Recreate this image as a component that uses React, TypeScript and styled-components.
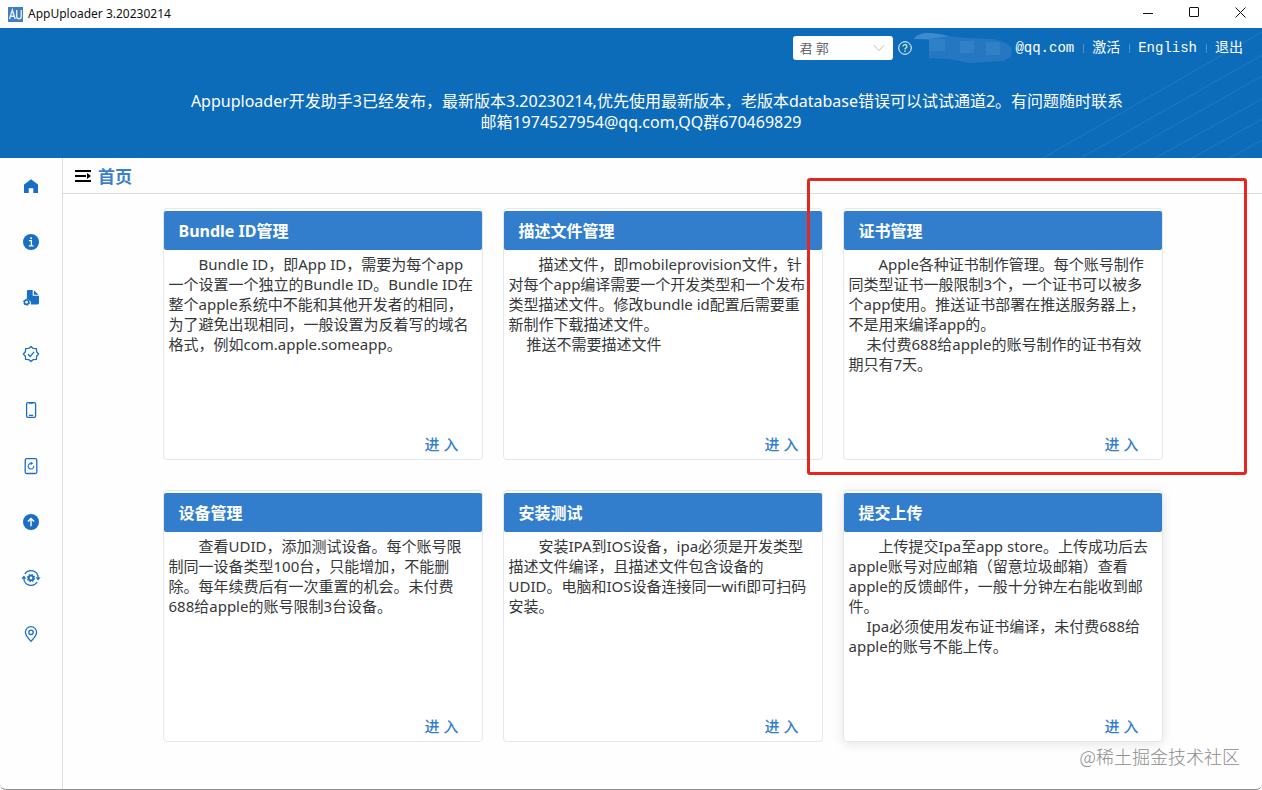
import React from 'react';
import styled, { createGlobalStyle, css } from 'styled-components';

const GlobalStyle = createGlobalStyle`
  *, *::before, *::after { box-sizing: border-box; }
  body {
    margin: 0;
    background: #fefefe;
    color: #36373a;
    font-family: 'Noto Sans', 'Noto Sans CJK SC', sans-serif;
  }
  button, select { font: inherit; }
`;

const blue = '#1a6fc4';

const Window = styled.div`
  position: relative;
  display: flex;
  flex-direction: column;
  min-height: 100vh;
  border-bottom: 1px solid #8f8f8f;
  border-radius: 0 0 6px 6px;
`;

const TitleBar = styled.div`
  display: flex;
  align-items: center;
  height: 28px;
  padding-left: 8px;
  background: #fff;
  color: #111;
`;

const AppLogo = styled.svg`
  width: 15px;
  height: 15px;
  margin-right: 5px;
`;

const AppName = styled.span`
  flex: 1;
  font-size: 12px;
  line-height: 16px;
`;

const WindowButton = styled.button`
  display: flex;
  align-items: center;
  justify-content: center;
  width: 46px;
  height: 28px;
  padding: 0 0 4px 2px;
  border: 0;
  background: transparent;
`;

const Header = styled.header`
  position: relative;
  height: 130px;
  background: #0d6cb9;
  color: #fff;
`;

const HeaderLines = styled.svg`
  position: absolute;
  right: 0;
  bottom: 0;
`;

const AccountBar = styled.div`
  position: relative;
  display: flex;
  align-items: center;
  justify-content: flex-end;
  height: 40px;
  padding-right: 19px;
  font-family: 'Liberation Mono', 'Noto Sans CJK SC', monospace;
  font-size: 14px;
  line-height: 20px;
`;

const TeamPicker = styled.label`
  position: relative;
  display: flex;
  width: 100px;
  margin-right: 5px;
`;

const TeamSelect = styled.select`
  width: 100%;
  height: 24px;
  padding: 0 24px 1px 6px;
  border: 0;
  border-radius: 3px;
  appearance: none;
  background: #fff;
  color: #606266;
  font-family: 'Noto Sans', 'Noto Sans CJK SC', sans-serif;
  font-size: 13px;
`;

const TeamArrow = styled.svg`
  position: absolute;
  top: 8px;
  right: 8px;
  pointer-events: none;
`;

const HelpButton = styled.button`
  display: flex;
  padding: 0;
  border: 0;
  background: transparent;
`;

const MaskedName = styled.svg`
  margin-right: 2px;
`;

const AccountLink = styled.a`
  color: #fff;
  text-decoration: none;
`;

const Divider = styled.span`
  width: 1px;
  height: 9px;
  margin: 0 8px 0 9px;
  background: #4d90cc;
`;

const Notice = styled.p`
  position: relative;
  margin: 23px 0 0;
  padding: 0 0 0 20px;
  font-size: 16px;
  line-height: 21px;
  text-align: center;
  text-indent: 32px;
`;

const Body = styled.div`
  display: flex;
  flex: 1;
`;

const Sidebar = styled.nav`
  flex: none;
  width: 63px;
  border-right: 1px solid #dcdfe6;
`;

const NavLink = styled.a`
  display: flex;
  align-items: center;
  justify-content: center;
  height: 56px;
  color: ${blue};
`;

const Main = styled.main`
  flex: 1;
`;

const Crumb = styled.div`
  display: flex;
  align-items: center;
  gap: 7px;
  height: 36px;
  padding-left: 12px;
  border-bottom: 1px solid #dadada;
`;

const MenuButton = styled.button`
  display: flex;
  padding: 0;
  border: 0;
  background: transparent;
`;

const CrumbTitle = styled.h1`
  margin: 0;
  padding-top: 2px;
  color: #3a7fcb;
  font-size: 17px;
  line-height: 24px;
`;

const CardGrid = styled.div`
  display: grid;
  grid-template-columns: repeat(auto-fit, 320px);
  gap: 30px 20px;
  justify-content: center;
  max-width: 1100px;
  margin: 0 auto;
  padding: 14px 0 40px;
`;

const CardBox = styled.section<{ $raised?: boolean }>`
  display: flex;
  flex-direction: column;
  min-height: 252px;
  padding-top: 2px;
  border: 1px solid #e4e7ed;
  border-radius: 4px;
  background: #fff;
  ${(p) => p.$raised && css`box-shadow: 0 2px 12px rgba(0, 0, 0, 0.1);`}
`;

const CardTitle = styled.h2`
  margin: 0;
  padding: 2px 15px 0;
  border-radius: 2px;
  background: #337ecc;
  color: #fff;
  font-size: 16px;
  line-height: 37px;
`;

const CardText = styled.div`
  flex: 1;
  padding: 4px 4px 0 5px;
  font-size: 15px;
  line-height: 20px;
`;

const Paragraph = styled.p<{ $indent: number }>`
  margin: 0;
  text-indent: ${(p) => p.$indent}px;
  white-space: pre-line;
`;

const EnterButton = styled.button`
  align-self: flex-end;
  margin: 0 23px 5px 0;
  padding: 0;
  border: 0;
  background: transparent;
  color: #337ecc;
  font-size: 15px;
  font-weight: 500;
  line-height: 20px;
`;

const Highlight = styled.div`
  position: absolute;
  top: 178px;
  right: 15px;
  width: 440px;
  height: 297px;
  border: 3px solid #e8261d;
  border-radius: 3px;
  pointer-events: none;
`;

const Watermark = styled.span`
  position: absolute;
  right: 22px;
  bottom: 20px;
  color: #8c8c8c;
  font-family: 'Noto Sans CJK SC', sans-serif;
  font-size: 18px;
  font-weight: 300;
  line-height: 26px;
`;

const Glyph = ({ children }: { children: React.ReactNode }) => (
  <svg width="20" height="20" viewBox="0 0 20 20" fill="none" stroke="currentColor" strokeWidth="1.3" aria-hidden="true">
    {children}
  </svg>
);

const nav = [
  {
    label: '首页',
    icon: <path fill="currentColor" stroke="none" d="M10 3.2 16.6 8.3a1 1 0 0 1 .4.8V17h-4.7v-4.8H7.7V17H3V9.1a1 1 0 0 1 .4-.8Z" />,
  },
  {
    label: 'Bundle ID管理',
    icon: (
      <>
        <circle cx="10" cy="10" r="8" fill="currentColor" stroke="none" />
        <path stroke="#fff" d="M8 8.7h2.4v5M7.8 13.9h4.8" />
        <circle cx="10.1" cy="6.2" r="1" fill="#fff" stroke="none" />
      </>
    ),
  },
  {
    label: '描述文件管理',
    icon: (
      <>
        <path fill="currentColor" stroke="none" d="M7.2 2h4.5v5.8h6.3v7a1.6 1.6 0 0 1-1.600 1.600H9.800a4 4 0 0 0-3.900-5.200V3.300A1.300 1.300 0 0 1 7.200 2Zm5.700.3 4.600 4.400h-4.600Z" />
        <circle cx="5.600" cy="14.200" r="2.100" strokeWidth="1.500" />
        <circle cx="5.600" cy="14.200" r="3.100" strokeWidth="1" strokeDasharray="1.600 1.650" />
      </>
    ),
  },
  {
    label: '证书管理',
    icon: (
      <>
        <path
          strokeLinejoin="round"
          d="M10 2.400 12.300 4.400 15.400 4.600 15.600 7.700 17.600 10 15.600 12.300 15.400 15.400 12.300 15.600 10 17.600 7.700 15.600 4.600 15.400 4.400 12.300 2.400 10 4.400 7.700 4.600 4.600 7.700 4.400Z"
        />
        <path d="m7 10.200 2.200 2.300 3.900-4.600" />
      </>
    ),
  },
  {
    label: '设备管理',
    icon: (
      <>
        <rect x="5.600" y="2.600" width="9" height="14.800" rx="1.300" />
        <path d="M8 3.200h4.200M8 15.400h4.200" />
      </>
    ),
  },
  {
    label: '安装测试',
    icon: (
      <>
        <rect x="4.200" y="2.700" width="11.600" height="14.800" rx="1.500" />
        <path strokeWidth="1.100" d="M12.700 9.600A2.800 2.800 0 1 1 9.600 7.400" />
        <path fill="currentColor" stroke="none" d="m9.500 5.400 2.700 1.900-2.600 1.900Z" />
      </>
    ),
  },
  {
    label: '提交上传',
    icon: (
      <>
        <circle cx="10" cy="10" r="8" fill="currentColor" stroke="none" />
        <path stroke="#fff" strokeWidth="1.400" d="M10 14.200V6.600M6.900 9.500 10 6.400l3.100 3.100" />
      </>
    ),
  },
  {
    label: '设置',
    icon: (
      <>
        <path d="M3.800 6A7.300 7.300 0 0 1 17.200 9.500M16.200 14A7.300 7.300 0 0 1 2.800 10.500" />
        <path fill="currentColor" stroke="none" d="M14.600 9.300h5L17.100 12.600ZM.4 10.700h5L2.900 7.400Z" />
        <circle cx="10" cy="10" r="2.300" strokeWidth="1.800" />
        <circle cx="10" cy="10" r="3.500" strokeWidth="1.200" strokeDasharray="1.550 1.200" />
      </>
    ),
  },
  {
    label: '位置',
    icon: (
      <>
        <path strokeLinejoin="round" d="M10 17.400C6.500 13.800 4.400 11.200 4.400 8.300a5.600 5.600 0 0 1 11.200 0c0 2.900-2.100 5.500-5.600 9.100Z" />
        <circle cx="10" cy="8.300" r="2.200" />
      </>
    ),
  },
];

interface CardData {
  title: string;
  intro: string;
  note?: string;
  raised?: boolean;
}

const cards: CardData[] = [
  {
    title: 'Bundle ID管理',
    intro: 'Bundle ID，即App ID，需要为每个app\n一个设置一个独立的Bundle ID。Bundle ID在\n整个apple系统中不能和其他开发者的相同，\n为了避免出现相同，一般设置为反着写的域名\n格式，例如com.apple.someapp。',
  },
  {
    title: '描述文件管理',
    intro: '描述文件，即mobileprovision文件，针\n对每个app编译需要一个开发类型和一个发布\n类型描述文件。修改bundle id配置后需要重\n新制作下载描述文件。',
    note: '推送不需要描述文件',
  },
  {
    title: '证书管理',
    intro: 'Apple各种证书制作管理。每个账号制作\n同类型证书一般限制3个，一个证书可以被多\n个app使用。推送证书部署在推送服务器上，\n不是用来编译app的。',
    note: '未付费688给apple的账号制作的证书有效\n期只有7天。',
  },
  {
    title: '设备管理',
    intro: '查看UDID，添加测试设备。每个账号限\n制同一设备类型100台，只能增加，不能删\n除。每年续费后有一次重置的机会。未付费\n688给apple的账号限制3台设备。',
  },
  {
    title: '安装测试',
    intro: '安装IPA到IOS设备，ipa必须是开发类型\n描述文件编译，且描述文件包含设备的\nUDID。电脑和IOS设备连接同一wifi即可扫码\n安装。',
  },
  {
    title: '提交上传',
    intro: '上传提交Ipa至app store。上传成功后去\napple账号对应邮箱（留意垃圾邮箱）查看\napple的反馈邮件，一般十分钟左右能收到邮\n件。',
    note: 'Ipa必须使用发布证书编译，未付费688给\napple的账号不能上传。',
    raised: true,
  },
];

const Card = ({ title, intro, note, raised }: CardData) => (
  <CardBox $raised={raised}>
    <CardTitle>{title}</CardTitle>
    <CardText>
      <Paragraph $indent={30}>{intro}</Paragraph>
      {note && <Paragraph $indent={18}>{note}</Paragraph>}
    </CardText>
    <EnterButton type="button">进 入</EnterButton>
  </CardBox>
);

export default function App() {
  return (
    <Window lang="zh-CN">
      <GlobalStyle />
      <TitleBar>
        <AppLogo viewBox="0 0 15 15" aria-hidden="true">
          <rect width="15" height="15" fill="#3f7fbd" />
          <path d="M1.500 12 4.300 3l2.900 9M2.400 9.200h3.900M8.700 3v6.500a2.300 2.300 0 0 0 4.600 0V3" fill="none" stroke="#e3eefa" strokeWidth="1.400" />
        </AppLogo>
        <AppName>AppUploader 3.20230214</AppName>
        <WindowButton type="button" aria-label="最小化">
          <svg width="11" height="11" fill="none" stroke="#111"><path d="M0 6.500h10" /></svg>
        </WindowButton>
        <WindowButton type="button" aria-label="最大化">
          <svg width="11" height="11" fill="none" stroke="#111"><rect x=".5" y=".5" width="9" height="9" rx=".5" /></svg>
        </WindowButton>
        <WindowButton type="button" aria-label="关闭">
          <svg width="11" height="11" fill="none" stroke="#111"><path d="m.5.5 10 10M10.500.5l-10 10" /></svg>
        </WindowButton>
      </TitleBar>
      <Header>
        <HeaderLines width="222" height="130" fill="none" stroke="#2a7ec6" strokeWidth="1" aria-hidden="true">
          <path opacity=".75" d="M3 130 222 4M41 130 222 27M77 130 222 48M115 130l107-59M152 130l70-39M190 130l32-18" />
        </HeaderLines>
        <AccountBar>
          <TeamPicker>
            <TeamSelect aria-label="团队" defaultValue="team">
              <option value="team">君 郭</option>
            </TeamSelect>
            <TeamArrow width="12" height="8" fill="none" stroke="#b4b8bf" aria-hidden="true"><path d="m1 1.500 5 5 5-5" /></TeamArrow>
          </TeamPicker>
          <HelpButton type="button" aria-label="帮助">
            <svg width="14" height="14" viewBox="0 0 14 14" fill="none" stroke="#fff">
              <circle cx="7" cy="7" r="6.300" />
              <path stroke="#b9f0c0" strokeWidth="1.400" d="M5.100 5.500a1.900 1.900 0 1 1 2.700 1.700c-.6.300-.8.600-.8 1.300M7 9.600V11" />
            </svg>
          </HelpButton>
          <MaskedName width="101" height="32" aria-hidden="true">
            <path fill="#3d8bce" d="M2 7C6 -1 20 0 37 4l2 4Z" />
            <path fill="#2577c1" d="M17 7 37 4l16 2 29 1 12 4 6 5-1 9-8 4-34 2-20-4-20-1Z" />
            <path fill="#3d8bce" opacity=".45" d="M17 7h16v12H17zM48 9h14v12H48zM74 10h14v13H74z" />
          </MaskedName>
          <AccountLink href="#account">@qq.com</AccountLink>
          <Divider />
          <AccountLink href="#activate">激活</AccountLink>
          <Divider />
          <AccountLink href="#english">English</AccountLink>
          <Divider />
          <AccountLink href="#logout">退出</AccountLink>
        </AccountBar>
        <Notice>
          Appuploader开发助手3已经发布，最新版本3.20230214,优先使用最新版本，老版本database错误可以试试通道2。有问题随时联系
          <br />
          邮箱1974527954@qq.com,QQ群670469829
        </Notice>
      </Header>
      <Body>
        <Sidebar>
          {nav.map((item) => (
            <NavLink key={item.label} href="#nav" aria-label={item.label}>
              <Glyph>{item.icon}</Glyph>
            </NavLink>
          ))}
        </Sidebar>
        <Main>
          <Crumb>
            <MenuButton type="button" aria-label="展开菜单">
              <svg width="16" height="14" fill="#000"><path d="M0 1h16v2H0zM0 6h11v2H0zM0 11h16v2H0zM12 4l4 3-4 3z" /></svg>
            </MenuButton>
            <CrumbTitle>首页</CrumbTitle>
          </Crumb>
          <CardGrid>
            {cards.map((card) => (
              <Card key={card.title} {...card} />
            ))}
          </CardGrid>
        </Main>
      </Body>
      <Highlight />
      <Watermark>@稀土掘金技术社区</Watermark>
    </Window>
  );
}
